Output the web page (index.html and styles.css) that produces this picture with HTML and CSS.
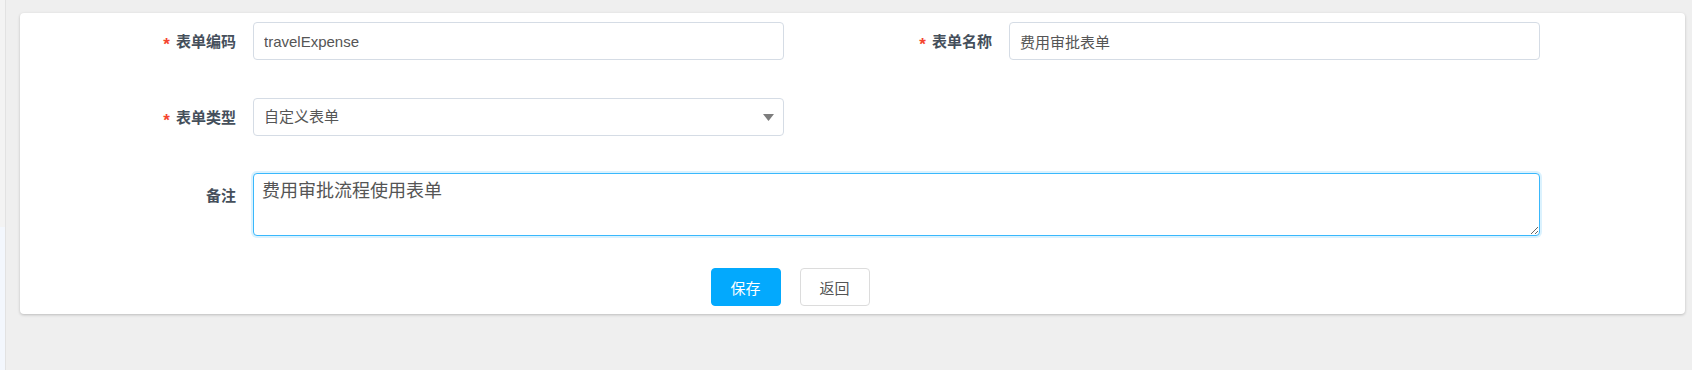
FILE: index.html
```html
<!DOCTYPE html>
<html lang="zh-CN">
<head>
    <meta charset="UTF-8">
    <meta name="viewport" content="width=device-width, initial-scale=1.0">
    <title>表单编辑</title>
    <link rel="stylesheet" href="styles.css">
</head>
<body>
    <div class="sidebar"></div>
    <div class="main">
        <div class="card">
            <form class="form-grid">
                <div class="form-item">
                    <label class="form-label required">表单编码</label>
                    <input class="form-input" type="text" value="travelExpense">
                </div>
                <div class="form-item">
                    <label class="form-label required">表单名称</label>
                    <input class="form-input" type="text" value="费用审批表单">
                </div>

                <div class="form-item">
                    <label class="form-label required">表单类型</label>
                    <div class="select-wrap">
                        <select class="form-input form-select">
                            <option>自定义表单</option>
                            <option>外部表单</option>
                        </select>
                        <svg class="caret" width="11" height="7" viewBox="0 0 11 7">
                            <path d="M0 0 H11 L5.5 7 Z" fill="#7d7d7d"/>
                        </svg>
                    </div>
                </div>
                <div></div>

                <div class="form-item wide">
                    <label class="form-label">备注</label>
                    <textarea class="form-textarea is-focus">费用审批流程使用表单</textarea>
                </div>

                <div class="form-actions">
                    <button type="button" class="btn btn-primary">保存</button>
                    <button type="button" class="btn">返回</button>
                </div>
            </form>
        </div>
    </div>
</body>
</html>
```

FILE: styles.css
```css
body {
    margin: 0;
    height: 370px;
    display: flex;
    background-color: #efefef;
    font-family: 'Liberation Sans', 'Noto Sans CJK SC', sans-serif;
    font-size: 15px;
    color: #555;
}
.sidebar {
    width: 5px;
    border-right: 1px solid #e2e2e2;
    background: linear-gradient(#f3f3f3 0, #f3f3f3 227px, #f3f7fd 227px);
}
.main {
    flex: 1;
    padding: 13px 7px 0 14px;
}
.card {
    background-color: white;
    border-radius: 4px;
    box-shadow: 0 1px 3px rgba(0,0,0,0.22);
    padding: 9px 0 8px 8px;
}
.form-grid {
    width: 1512px;
    display: grid;
    grid-template-columns: 756px 756px;
    row-gap: 37.5px;
}
.form-item {
    display: flex;
    align-items: center;
}
.form-item.wide {
    grid-column: 1 / -1;
    align-items: flex-start;
}
.form-label {
    width: 225px;
    flex-shrink: 0;
    box-sizing: border-box;
    padding-right: 17px;
    text-align: right;
    font-weight: bold;
    color: #454f5b;
}
.form-item.wide .form-label {
    padding-top: 11px;
}
.required::before {
    content: '*';
    display: inline-block;
    color: #f5452f;
    margin-right: 6px;
    font-size: 17px;
    font-weight: bold;
    position: relative;
    top: 3px;
}
.form-input {
    flex: 1;
    height: 38px;
    box-sizing: border-box;
    border: 1px solid #d5dce5;
    border-radius: 4px;
    padding: 0 10px;
    font-family: inherit;
    font-size: 15px;
    color: #555;
    background-color: white;
    outline: none;
}
.select-wrap {
    flex: 1;
    position: relative;
    display: flex;
}
.form-select {
    appearance: none;
    -webkit-appearance: none;
}
.caret {
    position: absolute;
    right: 10px;
    top: 16px;
}
.form-textarea {
    flex: 1;
    height: 63px;
    box-sizing: border-box;
    border: 1px solid #3ab8fc;
    border-radius: 4px;
    padding: 4px 8px;
    font-family: inherit;
    font-size: 18px;
    line-height: 26px;
    color: #555;
    resize: vertical;
    outline: none;
}
.form-textarea.is-focus {
    box-shadow: 0 0 0 2px rgba(58,184,252,0.18);
}
.form-actions {
    grid-column: 1 / -1;
    margin-top: -5.5px;
    padding-left: 12px;
    display: flex;
    justify-content: center;
    gap: 19px;
}
.btn {
    width: 70px;
    height: 38px;
    border: 1px solid #dcdcdc;
    border-radius: 4px;
    background-color: white;
    color: #555;
    font-family: inherit;
    font-size: 15px;
    cursor: pointer;
}
.btn-primary {
    background-color: #03a9fd;
    border-color: #03a9fd;
    color: white;
}
```
